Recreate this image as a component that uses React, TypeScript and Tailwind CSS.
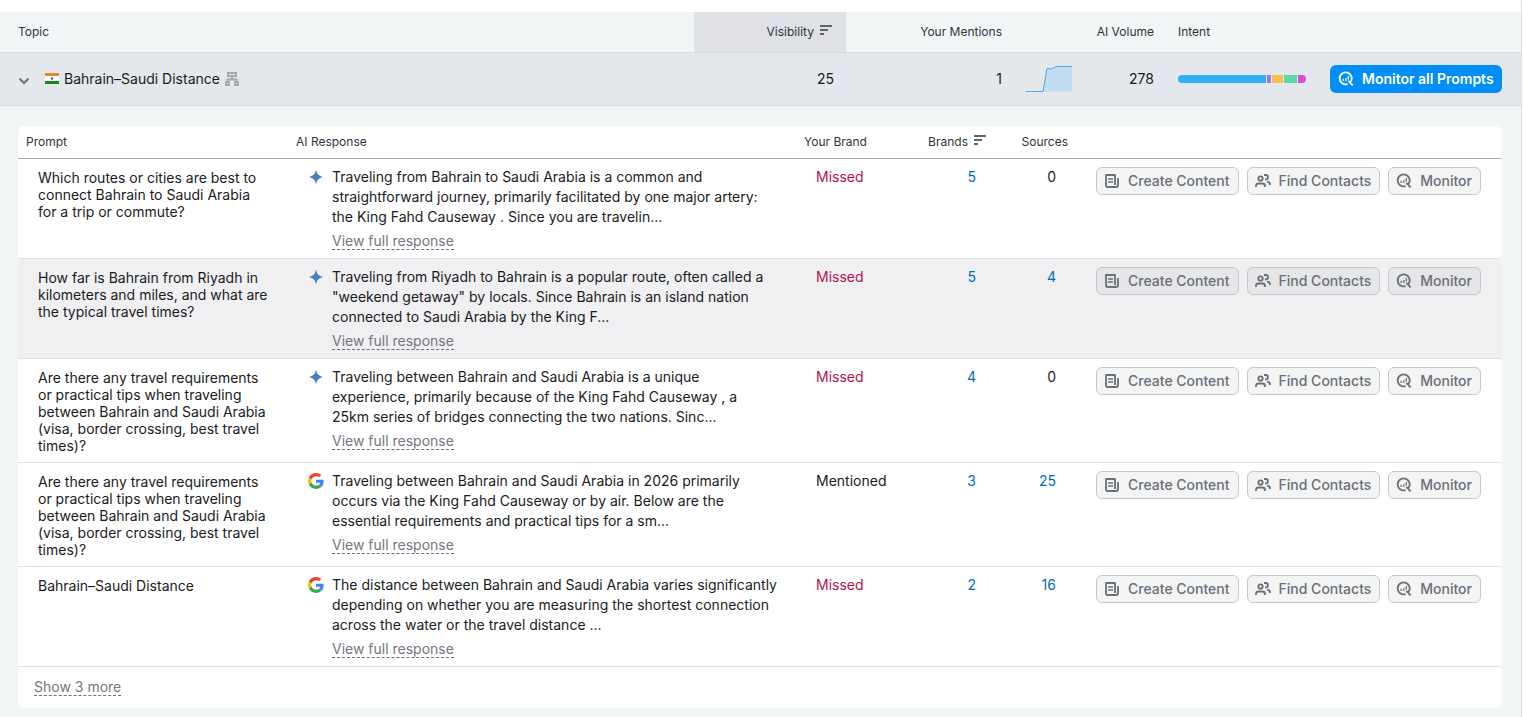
import type { ReactNode } from "react"
import clsx from "clsx"

interface PromptRow {
  prompt: string
  source: "gemini" | "google"
  response: string
  mentioned: boolean
  brands: number
  sources: number
  active?: boolean
}

const SortIcon = () => (
  <svg width="12" height="11" viewBox="0 0 12 11" className="mt-px shrink-0 text-[#5f656c]" fill="currentColor">
    <rect x="0" y="0" width="12" height="2" />
    <rect x="0" y="4" width="8" height="2" />
    <rect x="0" y="8" width="4" height="2" />
  </svg>
)

const MonitorIcon = () => (
  <svg width="16" height="16" viewBox="0 0 16 16" fill="none" stroke="currentColor" strokeWidth="1.8">
    <path d="M9.600 13.100A6 6 0 1 1 12 11.600L14.700 14.400M12 11.600L10.300 9.900" />
    <path d="M5.200 7.800V10M7.900 7V10M10.300 5V8.600" strokeWidth="1.300" />
  </svg>
)

const ContentIcon = () => (
  <svg width="16" height="16" viewBox="0 0 16 16" fill="none" stroke="currentColor" strokeWidth="1.800">
    <path d="M11 12V2H2v10a2 2 0 0 0 2 2h8a2 2 0 0 0 2-2V5" strokeLinejoin="round" />
    <path d="M4 6h5M4 9h5" strokeWidth="1.600" />
  </svg>
)

const ContactsIcon = () => (
  <svg width="16" height="16" viewBox="0 0 16 16" fill="none" stroke="currentColor" strokeWidth="1.800">
    <circle cx="5.500" cy="5.500" r="2.200" />
    <path d="M1 14v-1a2.500 2.500 0 0 1 2.500-2.500h4A2.500 2.500 0 0 1 10 13v1" />
    <path d="M9 2h1.800a2.200 2.200 0 0 1 0 4.400H10M12 8.800h.5A2.500 2.500 0 0 1 15 11.300V12" />
  </svg>
)

const GeminiIcon = () => (
  <svg width="16" height="16" viewBox="0 0 16 16">
    <path d="M8 .5C8.800 5 11 7.200 15.500 8 11 8.800 8.800 11 8 15.500 7.200 11 5 8.800.5 8 5 7.200 7.200 5 8 .5Z" fill="#4680c2" />
  </svg>
)

const GoogleIcon = () => (
  <svg width="16" height="16" viewBox="0 0 48 48">
    <path fill="#EA4335" d="M24 9.500c3.540 0 6.710 1.220 9.210 3.600l6.850-6.850C35.900 2.380 30.470 0 24 0 14.620 0 6.510 5.380 2.560 13.220l7.980 6.190C12.430 13.720 17.740 9.500 24 9.500z" />
    <path fill="#4285F4" d="M46.980 24.550c0-1.570-.15-3.090-.38-4.550H24v9.020h12.940c-.58 2.960-2.260 5.480-4.780 7.180l7.730 6c4.510-4.180 7.090-10.360 7.090-17.650z" />
    <path fill="#FBBC05" d="M10.530 28.590c-.48-1.450-.76-2.990-.76-4.590s.27-3.140.76-4.590l-7.980-6.190C.92 16.460 0 20.120 0 24c0 3.880.92 7.540 2.560 10.780l7.970-6.190z" />
    <path fill="#34A853" d="M24 48c6.480 0 11.930-2.130 15.890-5.810l-7.730-6c-2.150 1.450-4.920 2.300-8.160 2.300-6.260 0-11.570-4.220-13.470-9.910l-7.980 6.190C6.510 42.620 14.620 48 24 48z" />
  </svg>
)

const IndiaFlag = () => (
  <svg width="14" height="12" viewBox="0 0 14 12" className="shrink-0">
    <rect width="14" height="11" fill="#fff" />
    <rect width="14" height="3" fill="#e08a2e" />
    <rect y="8" width="14" height="3" fill="#178a1c" />
    <circle cx="7" cy="5.500" r="1.300" fill="#5b6498" />
  </svg>
)

const ClusterIcon = () => (
  <svg width="14" height="14" viewBox="0 0 14 14" fill="none" stroke="#a5a9b0" strokeWidth="2" className="shrink-0">
    <path d="M3 1h8v3H3zM1 10h3v3H1zM10 10h3v3h-3zM7 4v3M2.500 10V7.500h9V10" />
  </svg>
)

function ActionButton({ icon, children }: { icon: ReactNode; children: ReactNode }) {
  return (
    <button
      type="button"
      className="flex h-7 items-center gap-2 rounded-md border border-[#c4c7cb] bg-[#6c6e79]/8 pr-2 pl-[7px] text-sm font-medium whitespace-nowrap text-[#6c6e79]"
    >
      {icon}
      {children}
    </button>
  )
}

function DashedLink({ children }: { children: ReactNode }) {
  return (
    <a href="#" className="inline-block border-b border-dashed border-[#6c6e79] text-sm leading-4 text-[#74777f]">
      {children}
    </a>
  )
}

function Count({ value }: { value: number }) {
  if (value === 0) return <span>0</span>
  return (
    <a href="#" className="text-[#006dbc]">
      {value}
    </a>
  )
}

function PromptTable() {
  return (
    <div className="overflow-hidden rounded-md bg-white pb-3">
      <table className="w-full table-fixed border-separate border-spacing-0 text-left text-sm">
        <colgroup>
          <col className="w-[270px]" />
          <col />
          <col className="w-[120px]" />
          <col className="w-20" />
          <col className="w-20" />
          <col className="w-[425px]" />
        </colgroup>
        <thead>
          <tr className="h-[33px] text-xs text-[#30343a] *:border-b *:border-[#a9abb0] *:px-2 *:font-normal">
            <th>Prompt</th>
            <th>AI Response</th>
            <th>Your Brand</th>
            <th>
              <span className="flex items-start justify-end gap-1.5 pr-0.5">
                Brands
                <SortIcon />
              </span>
            </th>
            <th className="text-right">Sources</th>
            <th aria-label="Actions" />
          </tr>
        </thead>
        <tbody>
          {promptRows.map((row, index) => (
            <tr
              key={index}
              className={clsx(
                "*:border-b *:border-[#e0e1e4] *:py-2 *:pl-5 *:align-top",
                row.active && "bg-[#f0f0f2]",
              )}
            >
              <td className="pr-5 leading-[17px]">
                <p className="pt-0.5">{row.prompt}</p>
              </td>
              <td className="pr-4">
                <div className="flex gap-2">
                  <span className="shrink-0 pt-0.5">{row.source === "gemini" ? <GeminiIcon /> : <GoogleIcon />}</span>
                  <div>
                    <p>{row.response}</p>
                    <div className="flex pt-1.5">
                      <DashedLink>View full response</DashedLink>
                    </div>
                  </div>
                </div>
              </td>
              <td className={row.mentioned ? "" : "text-[#b5124c]"}>{row.mentioned ? "Mentioned" : "Missed"}</td>
              <td className="pr-5 text-right">
                <Count value={row.brands} />
              </td>
              <td className="pr-5 text-right">
                <Count value={row.sources} />
              </td>
              <td className="pr-5">
                <div className="flex justify-end gap-2">
                  <ActionButton icon={<ContentIcon />}>Create Content</ActionButton>
                  <ActionButton icon={<ContactsIcon />}>Find Contacts</ActionButton>
                  <ActionButton icon={<MonitorIcon />}>Monitor</ActionButton>
                </div>
              </td>
            </tr>
          ))}
        </tbody>
      </table>
      <div className="flex px-4 pt-3">
        <DashedLink>Show 3 more</DashedLink>
      </div>
    </div>
  )
}

export default function App() {
  return (
    <div className="min-h-screen bg-white pr-0.5 font-['Inter',sans-serif] text-[#191b23]">
      <main className="min-h-screen border-r border-[#dfe2e5] pt-3">
        <div className="min-h-[calc(100vh-12px)] bg-[#f2f5f6]">
          <table className="w-full table-fixed border-separate border-spacing-0 text-left text-sm">
            <colgroup>
              <col />
              <col className="w-[152px]" />
              <col className="w-[168px]" />
              <col className="w-[70px]" />
              <col className="w-[82px]" />
              <col className="w-[152px]" />
              <col className="w-[203px]" />
            </colgroup>
            <thead>
              <tr className="h-[41px] text-xs text-[#30343a] *:border-b *:border-[#d6dade] *:px-3 *:font-normal">
                <th>
                  <span className="pl-1.5">Topic</span>
                </th>
                <th className="bg-[#dfe1e6]">
                  <span className="flex items-start justify-end gap-1.5 pr-0.5">
                    Visibility
                    <SortIcon />
                  </span>
                </th>
                <th className="text-right">Your Mentions</th>
                <th aria-label="Trend" />
                <th className="text-right whitespace-nowrap">AI Volume</th>
                <th>Intent</th>
                <th aria-label="Actions" />
              </tr>
            </thead>
            <tbody>
              <tr className="h-[53px] bg-[#e4e7eb] *:border-b *:border-[#d9dde1] *:px-3">
                <td>
                  <div className="flex items-center pl-1.5">
                    <button type="button" aria-label="Collapse topic" className="mr-[15px] text-[#6c6e79]">
                      <svg width="12" height="12" viewBox="0 0 12 12" fill="none" stroke="currentColor" strokeWidth="2">
                        <path d="M1.500 5.500L6 10 10.500 5.500" />
                      </svg>
                    </button>
                    <IndiaFlag />
                    <span className="px-[5px]">Bahrain–Saudi Distance</span>
                    <ClusterIcon />
                  </div>
                </td>
                <td className="text-right">25</td>
                <td className="text-right">1</td>
                <td>
                  <svg width="46" height="28" viewBox="0 0 46 28">
                    <path d="M17 26.500L21 3.500 25 4 30 1.500H46V26.500Z" fill="#bfdcf1" />
                    <path d="M0 26.500H17L21 3.500 25 4 30 1.500H46" fill="none" stroke="#55a5e2" />
                  </svg>
                </td>
                <td className="text-right">278</td>
                <td>
                  <div className="flex h-2 gap-px overflow-hidden rounded-full">
                    {intents.map((intent) => (
                      <div key={intent.name} className={intent.color} style={{ flexGrow: intent.share, flexBasis: 0 }} />
                    ))}
                  </div>
                </td>
                <td>
                  <button
                    type="button"
                    className="flex h-7 items-center gap-2 rounded-md bg-[#008ff8] px-2 text-sm font-semibold whitespace-nowrap text-white"
                  >
                    <MonitorIcon />
                    Monitor all Prompts
                  </button>
                </td>
              </tr>
              <tr>
                <td colSpan={7} className="pt-5 pr-5 pb-2 pl-[18px]">
                  <PromptTable />
                </td>
              </tr>
            </tbody>
          </table>
        </div>
      </main>
    </div>
  )
}

const intents = [
  { name: "Informational", share: 88, color: "bg-[#2fb0f7]" },
  { name: "Navigational", share: 4, color: "bg-[#a675dd]" },
  { name: "Commercial", share: 11, color: "bg-[#f8c04a]" },
  { name: "Transactional", share: 13, color: "bg-[#54dba5]" },
  { name: "Task", share: 8, color: "bg-[#d550d8]" },
]

const promptRows: PromptRow[] = [
  {
    prompt: "Which routes or cities are best to connect Bahrain to Saudi Arabia for a trip or commute?",
    source: "gemini",
    response:
      "Traveling from Bahrain to Saudi Arabia is a common and straightforward journey, primarily facilitated by one major artery: the King Fahd Causeway . Since you are travelin...",
    mentioned: false,
    brands: 5,
    sources: 0,
  },
  {
    prompt: "How far is Bahrain from Riyadh in kilometers and miles, and what are the typical travel times?",
    source: "gemini",
    response:
      'Traveling from Riyadh to Bahrain is a popular route, often called a "weekend getaway" by locals. Since Bahrain is an island nation connected to Saudi Arabia by the King F...',
    mentioned: false,
    brands: 5,
    sources: 4,
    active: true,
  },
  {
    prompt:
      "Are there any travel requirements or practical tips when traveling between Bahrain and Saudi Arabia (visa, border crossing, best travel times)?",
    source: "gemini",
    response:
      "Traveling between Bahrain and Saudi Arabia is a unique experience, primarily because of the King Fahd Causeway , a 25km\u00a0series of bridges connecting the two nations. Sinc...",
    mentioned: false,
    brands: 4,
    sources: 0,
  },
  {
    prompt:
      "Are there any travel requirements or practical tips when traveling between Bahrain and Saudi Arabia (visa, border crossing, best travel times)?",
    source: "google",
    response:
      "Traveling between Bahrain and Saudi Arabia in 2026 primarily occurs via the King Fahd Causeway or by air. Below are the essential requirements and practical tips for a sm...",
    mentioned: true,
    brands: 3,
    sources: 25,
  },
  {
    prompt: "Bahrain–Saudi Distance",
    source: "google",
    response:
      "The distance between Bahrain and Saudi Arabia varies significantly depending on whether you are measuring the shortest connection across the water or the travel distance ...",
    mentioned: false,
    brands: 2,
    sources: 16,
  },
]
